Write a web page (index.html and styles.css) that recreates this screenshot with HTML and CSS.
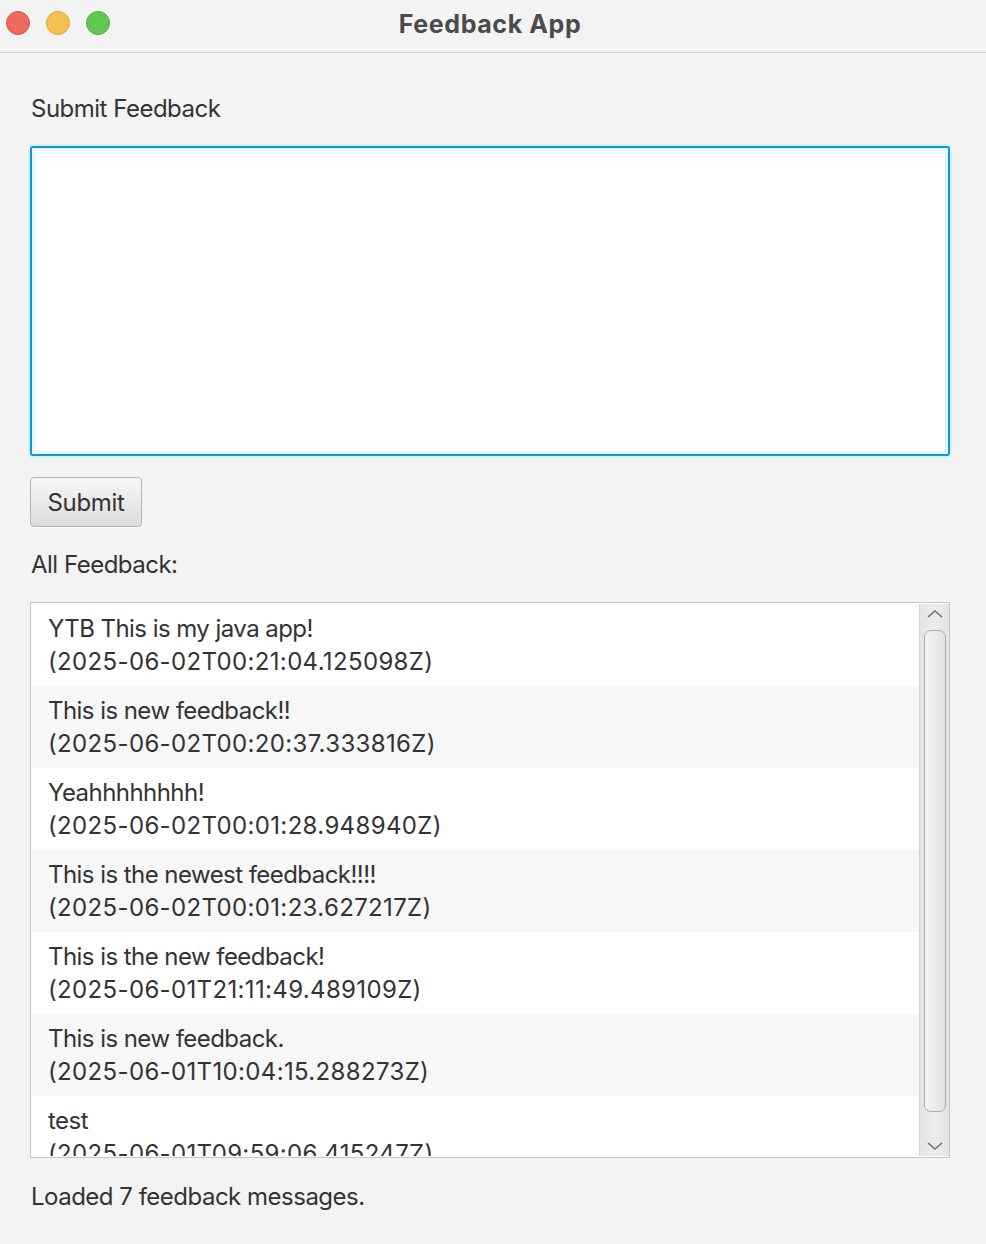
FILE: index.html
```html
<!DOCTYPE html>
<html>
<head>
<meta charset="utf-8">
<title>Feedback App</title>
<link rel="stylesheet" href="styles.css">
</head>
<body>
<div class="window">
  <header class="titlebar">
    <div class="lights">
      <span class="light red"></span>
      <span class="light yellow"></span>
      <span class="light green"></span>
    </div>
    <div class="title">Feedback App</div>
  </header>
  <main class="content">
    <div class="label first">Submit Feedback</div>
    <div class="textarea"></div>
    <button class="btn">Submit</button>
    <div class="label second">All Feedback:</div>
    <div class="list">
      <div class="rows">
        <div class="row">YTB This is my java app!<br><span class="ts">(2025-06-02T00:21:04.125098Z)</span></div>
        <div class="row alt">This is new feedback!!<br><span class="ts">(2025-06-02T00:20:37.333816Z)</span></div>
        <div class="row">Yeahhhhhhhh!<br><span class="ts">(2025-06-02T00:01:28.948940Z)</span></div>
        <div class="row alt">This is the newest feedback!!!!<br><span class="ts">(2025-06-02T00:01:23.627217Z)</span></div>
        <div class="row">This is the new feedback!<br><span class="ts">(2025-06-01T21:11:49.489109Z)</span></div>
        <div class="row alt">This is new feedback.<br><span class="ts">(2025-06-01T10:04:15.288273Z)</span></div>
        <div class="row">test<br><span class="ts">(2025-06-01T09:59:06.415247Z)</span></div>
      </div>
      <div class="scrollbar">
        <svg class="arrow" width="20" height="12" viewBox="0 0 20 12"><path d="M3 9 L10 3 L17 9" fill="none" stroke="#6e6e6e" stroke-width="1.6"/></svg>
        <div class="track"><div class="thumb"></div></div>
        <svg class="arrow" width="20" height="12" viewBox="0 0 20 12"><path d="M3 3 L10 9 L17 3" fill="none" stroke="#6e6e6e" stroke-width="1.6"/></svg>
      </div>
    </div>
    <div class="status">Loaded 7 feedback messages.</div>
  </main>
</div>
</body>
</html>
```
FILE: styles.css
```css
* { box-sizing: border-box; }
html, body {
  margin: 0;
  padding: 0;
  background: #f3f3f3;
}
body {
  font-family: Inter, "Liberation Sans", sans-serif;
  color: #333333;
  width: 986px;
  height: 1244px;
  overflow: hidden;
}
.titlebar {
  height: 53px;
  border-bottom: 1px solid #d2d2d2;
  position: relative;
  display: flex;
  align-items: center;
  justify-content: center;
  background: #f3f3f3;
}
.lights {
  position: absolute;
  left: 6px;
  top: 11px;
  display: flex;
  gap: 16px;
}
.light {
  width: 24px;
  height: 24px;
  border-radius: 50%;
  display: block;
}
.red { background: #ee6a5f; border: 1px solid #d8574c; }
.yellow { background: #f6c04f; border: 1px solid #dba73e; }
.green { background: #62c655; border: 1px solid #51ad45; }
.title {
  font-weight: 700;
  font-size: 25px;
  color: #4b4b4b;
  margin-top: -5px;
  margin-left: -6px;
  letter-spacing: 0.6px;
}
.content {
  padding: 0 36px 0 30px;
  display: flex;
  flex-direction: column;
  align-items: flex-start;
}
.label {
  font-size: 24px;
  line-height: 30px;
  letter-spacing: -0.5px;
  padding-left: 1px;
}
.label.first { margin-top: 41px; }
.textarea {
  margin-top: 22px;
  width: 920px;
  height: 310px;
  background: #ffffff;
  border: 2px solid #0a9ad8;
  border-radius: 3px;
  box-shadow: 0 0 0 2px #d9eef8, inset 0 0 0 3px #e6f4fb;
}
.btn {
  margin-top: 21px;
  width: 112px;
  height: 50px;
  border: 1px solid #b3b3b3;
  border-radius: 4px;
  background: linear-gradient(#f7f7f7, #dcdcdc);
  font-family: inherit;
  font-size: 24px;
  color: #333333;
  padding: 0;
  letter-spacing: -0.3px;
  box-shadow: 0 1px 0 #ffffff;
}
.label.second { margin-top: 23px; }
.list {
  margin-top: 22px;
  width: 920px;
  height: 556px;
  border: 1px solid #c6c6c6;
  background: #ffffff;
  display: flex;
  overflow: hidden;
  padding: 1px 0 1px 1px;
}
.rows {
  flex: 1;
  overflow: hidden;
}
.row {
  height: 82px;
  padding: 8px 0 0 16px;
  font-size: 24px;
  line-height: 33px;
  letter-spacing: -0.55px;
  background: #ffffff;
  white-space: nowrap;
}
.row .ts { letter-spacing: 0.35px; }
.row.alt { background: #f7f7f7; }
.scrollbar {
  width: 30px;
  border-left: 1px solid #d4d4d4;
  background: linear-gradient(90deg, #e4e4e4, #ececec 50%, #e4e4e4);
  display: flex;
  flex-direction: column;
  align-items: center;
}
.arrow {
  display: block;
  flex: none;
  margin: 4px 0 6px;
}
.arrow:last-child { margin: 6px 0 4px; }
.track {
  flex: 1;
  width: 100%;
  display: flex;
  justify-content: center;
  padding: 4px 0 22px;
}
.thumb {
  width: 22px;
  height: 100%;
  border: 1px solid #acacac;
  border-radius: 7px;
  background: linear-gradient(90deg, #f4f4f4, #e2e2e2);
}
.status {
  margin-top: 24px;
  font-size: 24px;
  line-height: 30px;
  letter-spacing: -0.5px;
  padding-left: 1px;
}
```
